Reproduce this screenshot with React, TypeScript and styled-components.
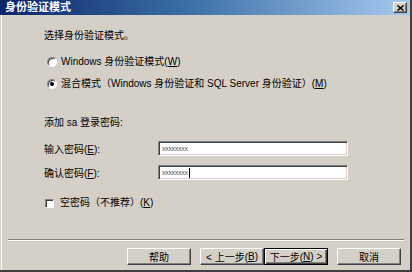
import React from 'react'
import styled, { createGlobalStyle } from 'styled-components'

const GlobalStyle = createGlobalStyle`
  html, body {
    margin: 0;
    padding: 0;
    background: #d4d0c8;
  }
  body {
    font-family: "Liberation Sans", "Noto Sans CJK SC", sans-serif;
    font-size: 10px;
    color: #000;
  }
`

const Window = styled.div`
  width: 412px;
  height: 272px;
  box-sizing: border-box;
  display: flex;
  flex-direction: column;
  background: #d4d0c8;
  border-right: 2px solid #404040;
  border-bottom: 2px solid #404040;
`

const TitleBar = styled.div`
  height: 15px;
  flex-shrink: 0;
  display: flex;
  align-items: center;
  justify-content: space-between;
  padding: 0 3px 0 5px;
  background: linear-gradient(to right, #0a246a 0%, #3a6ea5 45%, #a6caf0 100%);
`

const Title = styled.span`
  color: #fff;
  font-weight: bold;
  font-size: 11px;
  line-height: 15px;
  letter-spacing: 0;
`

const CloseButton = styled.div`
  width: 14px;
  height: 11px;
  box-sizing: border-box;
  display: flex;
  align-items: center;
  justify-content: center;
  background: #d4d0c8;
  border: 1px solid;
  border-color: #ffffff #404040 #404040 #ffffff;
  box-shadow: inset -1px -1px #808080;
`

const Body = styled.div`
  flex: 1;
  display: flex;
  flex-direction: column;
  border-left: 1px solid #d4d0c8;
  box-shadow: inset 1px 0 #ffffff;
`

const Content = styled.div`
  display: flex;
  flex-direction: column;
  padding: 14px 0 0 43px;
`

const Line = styled.div<{ $gap?: number }>`
  height: 14px;
  line-height: 14px;
  margin-top: ${(p) => p.$gap ?? 0}px;
  display: flex;
  align-items: center;
  white-space: nowrap;
`

const Key = styled.span`
  text-decoration: underline;
`

const RadioDot = styled.span<{ $checked?: boolean }>`
  width: 10px;
  height: 10px;
  box-sizing: border-box;
  margin: 0 4px 0 3px;
  border-radius: 50%;
  background: #fff;
  border: 1px solid;
  border-color: #808080 #ffffff #ffffff #808080;
  box-shadow: inset 1px 1px #404040;
  display: flex;
  align-items: center;
  justify-content: center;

  &::after {
    content: '';
    width: 4px;
    height: 4px;
    border-radius: 50%;
    background: ${(p) => (p.$checked ? '#000' : 'transparent')};
  }
`

const CheckBox = styled.span`
  width: 9px;
  height: 9px;
  box-sizing: border-box;
  margin: 0 6px 0 1px;
  background: #fff;
  border: 1px solid;
  border-color: #808080 #ffffff #ffffff #808080;
  box-shadow: inset 1px 1px #404040;
`

const FieldRow = styled.div<{ $gap: number }>`
  display: flex;
  align-items: center;
  height: 15px;
  margin-top: ${(p) => p.$gap}px;
`

const FieldLabel = styled.span`
  width: 114px;
  white-space: nowrap;
`

const TextBox = styled.div`
  width: 190px;
  height: 15px;
  box-sizing: border-box;
  display: flex;
  align-items: center;
  padding-left: 3px;
  background: #fff;
  border: 1px solid;
  border-color: #808080 #ffffff #ffffff #808080;
  box-shadow: inset 1px 1px #404040, inset -1px -1px #d4d0c8;
  font-size: 7px;
  color: #555;
  letter-spacing: -0.3px;
`

const Caret = styled.span`
  width: 1px;
  height: 10px;
  margin-left: 1px;
  background: #000;
`

const Footer = styled.div`
  margin-top: auto;
  display: flex;
  flex-direction: column;
  padding-bottom: 5px;
`

const Separator = styled.div`
  height: 0;
  margin: 0 6px 0 7px;
  border-top: 1px solid #808080;
  border-bottom: 1px solid #ffffff;
`

const ButtonRow = styled.div`
  display: flex;
  justify-content: flex-end;
  margin-top: 7px;
  padding-right: 9px;
`

const Button = styled.div<{ $default?: boolean; $before?: number; $after?: number }>`
  width: 64px;
  height: 17px;
  box-sizing: border-box;
  display: flex;
  align-items: center;
  justify-content: center;
  white-space: nowrap;
  margin-left: ${(p) => p.$before ?? 0}px;
  margin-right: ${(p) => p.$after ?? 0}px;
  background: #d4d0c8;
  border: 1px solid;
  border-color: ${(p) =>
    p.$default ? '#000' : '#ffffff #404040 #404040 #ffffff'};
  box-shadow: ${(p) =>
    p.$default
      ? 'inset 1px 1px #ffffff, inset -1px -1px #404040, inset -2px -2px #808080'
      : 'inset -1px -1px #808080'};
`

export default function App() {
  return (
    <>
      <GlobalStyle />
      <Window>
        <TitleBar>
          <Title>身份验证模式</Title>
          <CloseButton>
            <svg width="7" height="6" viewBox="0 0 7 6">
              <path d="M0.5 0.5 L6.5 5.5 M6.5 0.5 L0.5 5.5" stroke="#000" strokeWidth="1.5" />
            </svg>
          </CloseButton>
        </TitleBar>
        <Body>
          <Content>
            <Line>选择身份验证模式。</Line>
            <Line $gap={12}>
              <RadioDot />
              Windows 身份验证模式(<Key>W</Key>)
            </Line>
            <Line $gap={8}>
              <RadioDot $checked />
              混合模式（Windows 身份验证和 SQL Server 身份验证）(<Key>M</Key>)
            </Line>
            <Line $gap={25}>添加 sa 登录密码:</Line>
            <FieldRow $gap={11}>
              <FieldLabel>
                输入密码(<Key>E</Key>):
              </FieldLabel>
              <TextBox>xxxxxxxx</TextBox>
            </FieldRow>
            <FieldRow $gap={9}>
              <FieldLabel>
                确认密码(<Key>F</Key>):
              </FieldLabel>
              <TextBox>
                xxxxxxxx
                <Caret />
              </TextBox>
            </FieldRow>
            <Line $gap={16}>
              <CheckBox />
              空密码（不推荐）(<Key>K</Key>)
            </Line>
          </Content>
          <Footer>
            <Separator />
            <ButtonRow>
              <Button $after={9}>帮助</Button>
              <Button>
                &lt; 上一步(<Key>B</Key>)
              </Button>
              <Button $default>
                下一步(<Key>N</Key>) &gt;
              </Button>
              <Button $before={9}>取消</Button>
            </ButtonRow>
          </Footer>
        </Body>
      </Window>
    </>
  )
}
